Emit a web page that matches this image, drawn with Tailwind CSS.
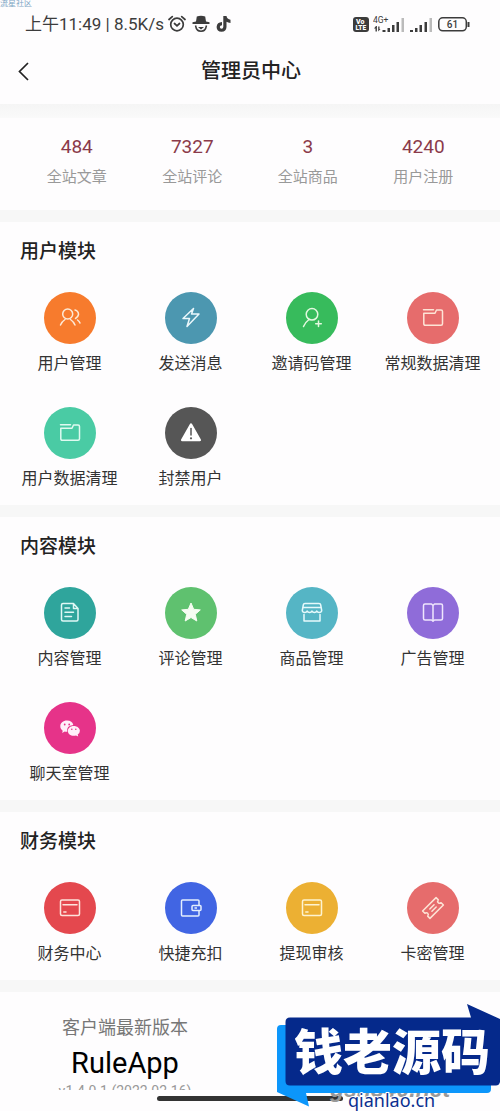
<!DOCTYPE html>
<html lang="zh-CN">
<head>
<meta charset="utf-8">
<meta name="viewport" content="width=device-width, initial-scale=1">
<title>管理员中心</title>
<script src="https://cdn.jsdelivr.net/npm/@tailwindcss/browser@4"></script>
</head>
<body class="bg-[#fefdfe] font-[Roboto,'Noto_Sans_CJK_SC',sans-serif] text-[#333]">
<div class="relative overflow-hidden">
  <span class="absolute top-0 left-0 text-[8px] leading-[8px] text-[#7fa6c4]">流星社区</span>

  <!-- Status bar -->
  <div class="flex h-12 items-center justify-between pr-[30px] pl-[25px] text-[#3c3c3c]">
    <div class="flex items-center gap-1">
      <span class="text-[17px] leading-6">上午11:49 | 8.5K/s</span>
      <svg class="h-[18px] w-[18px]" viewBox="0 0 18 18" fill="none" stroke="currentColor" stroke-width="1.7" stroke-linecap="round"><circle cx="9" cy="9.5" r="6.3"/><path d="M1 4.5 4.3 1.6M17 4.5 13.700 1.600M6.500 8.500 9 10.800 11.500 8.500"/></svg>
      <svg class="ml-[2px] h-[18px] w-[18px]" viewBox="0 0 18 18"><path d="M4 6.500 4.800 1.500Q9 0 13.200 1.500L14 6.500 17.500 7.300V9H.5V7.300Z" fill="currentColor"/><path d="M3.500 10.500Q4.500 16.300 9 16.300T14.500 10.500" fill="none" stroke="currentColor" stroke-width="1.500"/><path d="M6 12H12L9 14.500Z" fill="currentColor"/></svg>
      <svg class="ml-[1px] h-[18px] w-[18px]" viewBox="0 0 18 18" fill="currentColor"><path d="M8.300 1H11.500Q12 4.300 15.500 4.800V8Q13 7.900 11.500 6.800V12Q11.300 16.500 6.500 16.800 1.800 16.300 1.600 11.900 2 7.200 7 7V10.200Q4.900 10.300 4.800 12 5 13.600 6.500 13.700 8.200 13.500 8.300 12Z"/></svg>
    </div>
    <div class="flex items-center">
      <svg class="h-[15px] w-4" viewBox="0 0 16 15"><rect width="16" height="15" rx="3" fill="#3c3c3c"/><text x="3" y="7" font-family="Roboto" font-weight="900" font-size="7" fill="#fff">Vo</text><text x="2.500" y="13" font-family="Roboto" font-weight="900" font-size="6.500" fill="#fff">LTE</text></svg>
      <svg class="ml-1 h-[18px] w-8" viewBox="0 0 32 18"><text x="0" y="8" font-family="Roboto" font-size="8.500" fill="#3c3c3c">4G+</text><path d="M3 11 1 13.500H2.500V16.500H3.900V11ZM5.200 16.500 7.500 14H6.500V11.500H5.200Z" fill="#3c3c3c"/><path d="M9.500 15H12.500V17H9.500ZM14.500 13H17V17H14.500ZM19 10H21.500V17H19ZM23.500 7H26V17H23.500Z" fill="#3c3c3c"/><path d="M28.500 3H31V17H28.500Z" fill="#bbb"/></svg>
      <svg class="ml-[5px] h-[18px] w-[23px]" viewBox="0 0 23 18"><path d="M0 15H3V17H0ZM5 13H7.500V17H5ZM9.500 10H12V17H9.500ZM14.500 7H17V17H14.500Z" fill="#3c3c3c"/><path d="M19.500 3H22V17H19.500Z" fill="#bbb"/></svg>
      <svg class="ml-[5px] h-[15px] w-8" viewBox="0 0 32 15"><rect x=".8" y=".8" width="27.500" height="13" rx="4" fill="none" stroke="#3c3c3c" stroke-width="1.500"/><path d="M30.500 5V10" stroke="#3c3c3c" stroke-width="2"/><text x="14.500" y="11" text-anchor="middle" font-family="Roboto" font-weight="500" font-size="10" fill="#3c3c3c">61</text></svg>
    </div>
  </div>

  <!-- Title bar -->
  <header class="grid h-14 grid-cols-[48px_1fr_46px] items-center pb-[10px]">
    <button type="button" aria-label="返回" class="flex h-10 items-center pl-[17px]">
      <svg class="h-5 w-3" viewBox="0 0 12 20" fill="none" stroke="#222" stroke-width="1.700"><path d="M11 2 2.500 10.500 11 19"/></svg>
    </button>
    <h1 class="text-center text-[20px] leading-7 font-medium text-[#222]">管理员中心</h1>
  </header>
  <div class="h-[14px] bg-linear-to-b from-[#f5f5f5] to-[#fafafa]"></div>

  <!-- Site totals -->
  <dl class="grid h-[92px] grid-cols-4 px-[19px] pt-[17px] text-center">
    <div class="flex flex-col-reverse justify-end"><dt class="mt-[6px] text-[15px] leading-6 text-[#999]">全站文章</dt><dd class="text-[19px] leading-6 text-[#8b3a4a]">484</dd></div>
    <div class="flex flex-col-reverse justify-end"><dt class="mt-[6px] text-[15px] leading-6 text-[#999]">全站评论</dt><dd class="text-[19px] leading-6 text-[#8b3a4a]">7327</dd></div>
    <div class="flex flex-col-reverse justify-end"><dt class="mt-[6px] text-[15px] leading-6 text-[#999]">全站商品</dt><dd class="text-[19px] leading-6 text-[#8b3a4a]">3</dd></div>
    <div class="flex flex-col-reverse justify-end"><dt class="mt-[6px] text-[15px] leading-6 text-[#999]">用户注册</dt><dd class="text-[19px] leading-6 text-[#8b3a4a]">4240</dd></div>
  </dl>
  <div class="h-3 bg-[#f7f7f7]"></div>

  <!-- Users -->
  <section class="pt-4 pb-[14px]">
    <h2 class="px-5 text-[19px] leading-7 font-medium text-[#222]">用户模块</h2>
    <div class="mt-[26px] grid grid-cols-4 gap-y-[31px] pr-[7px] pl-[9px]">
      <button type="button" class="flex flex-col items-center gap-2 whitespace-nowrap">
        <span class="flex size-[52px] items-center justify-center rounded-full bg-[#f77b2d]"><svg class="size-6" viewBox="0 0 24 24" fill="none" stroke="#fde9d6" stroke-width="1.500" stroke-linecap="round" stroke-linejoin="round"><circle cx="9.700" cy="8" r="5"/><path d="M2.500 19Q4 15.500 7 13.500M12.500 13.500Q15.500 15.500 17 19M17 4Q20.500 5 20.500 8.500 20 11.300 17.500 12.500M19.500 14Q21.300 15.200 22 17"/></svg></span>
        <span class="text-[16px] leading-6">用户管理</span>
      </button>
      <button type="button" class="flex flex-col items-center gap-2 whitespace-nowrap">
        <span class="flex size-[52px] items-center justify-center rounded-full bg-[#4c97b0]"><svg class="size-6" viewBox="0 0 24 24" fill="none" stroke="#eaf7fb" stroke-width="1.500" stroke-linejoin="round" stroke-linecap="round"><path d="M14.500 2.500 4 12.500H10.500L8 20.500 20 8H12.500L14.500 2.500"/></svg></span>
        <span class="text-[16px] leading-6">发送消息</span>
      </button>
      <button type="button" class="flex flex-col items-center gap-2 whitespace-nowrap">
        <span class="flex size-[52px] items-center justify-center rounded-full bg-[#37bb5c]"><svg class="size-6" viewBox="0 0 24 24" fill="none" stroke="#e3f8df" stroke-width="1.500" stroke-linecap="round"><circle cx="12" cy="8.300" r="5.800"/><path d="M3.500 20.500Q5 16.500 9 13.500M18.500 15V20.500M15.700 17.800H21.300"/></svg></span>
        <span class="text-[16px] leading-6">邀请码管理</span>
      </button>
      <button type="button" class="flex flex-col items-center gap-2 whitespace-nowrap">
        <span class="flex size-[52px] items-center justify-center rounded-full bg-[#e66c6c]"><svg class="size-6" viewBox="0 0 24 24" fill="none" stroke="#fde4d6" stroke-width="1.500" stroke-linecap="round" stroke-linejoin="round"><path d="M2.500 3.800H12.500M2.800 7.200H14L15.500 4H20Q21.500 4 21.500 5.500V17.800Q21.500 19.300 20 19.300H4.300Q2.800 19.300 2.800 17.800Z"/></svg></span>
        <span class="text-[16px] leading-6">常规数据清理</span>
      </button>
      <button type="button" class="flex flex-col items-center gap-2 whitespace-nowrap">
        <span class="flex size-[52px] items-center justify-center rounded-full bg-[#4acba4]"><svg class="size-6" viewBox="0 0 24 24" fill="none" stroke="#dffaf0" stroke-width="1.500" stroke-linecap="round" stroke-linejoin="round"><path d="M2.500 3.800H12.500M2.800 7.200H14L15.500 4H20Q21.500 4 21.500 5.500V17.800Q21.500 19.300 20 19.300H4.300Q2.800 19.300 2.800 17.800Z"/></svg></span>
        <span class="text-[16px] leading-6">用户数据清理</span>
      </button>
      <button type="button" class="flex flex-col items-center gap-2 whitespace-nowrap">
        <span class="flex size-[52px] items-center justify-center rounded-full bg-[#565656]"><svg class="size-6" viewBox="0 0 24 24"><path d="M12 3.500 20.800 19H3.200Z" fill="#fff" stroke="#fff" stroke-width="2.500" stroke-linejoin="round"/><path d="M12 7.500V14" stroke="#565656" stroke-width="1.500" stroke-linecap="round"/><circle cx="12" cy="17.300" r="1.100" fill="#565656"/></svg></span>
        <span class="text-[16px] leading-6">封禁用户</span>
      </button>
    </div>
  </section>
  <div class="h-3 bg-[#f7f7f7]"></div>

  <!-- Content -->
  <section class="pt-4 pb-[14px]">
    <h2 class="px-5 text-[19px] leading-7 font-medium text-[#222]">内容模块</h2>
    <div class="mt-[26px] grid grid-cols-4 gap-y-[31px] pr-[7px] pl-[9px]">
      <button type="button" class="flex flex-col items-center gap-2 whitespace-nowrap">
        <span class="flex size-[52px] items-center justify-center rounded-full bg-[#2fa59c]"><svg class="size-6" viewBox="0 0 24 24" fill="none" stroke="#e0f8f5" stroke-width="1.500" stroke-linecap="round" stroke-linejoin="round"><path d="M15.500 2.500H5Q3.500 2.500 3.500 4V18.500Q3.500 20 5 20H18.500Q20 20 20 18.500V7.500ZM15.500 2.500V7.500H20M7 7H11.500M7 11.300H15.500M7 15.500H13.500"/></svg></span>
        <span class="text-[16px] leading-6">内容管理</span>
      </button>
      <button type="button" class="flex flex-col items-center gap-2 whitespace-nowrap">
        <span class="flex size-[52px] items-center justify-center rounded-full bg-[#5fc16f]"><svg class="size-6" viewBox="0 0 24 24" fill="#f6fdf2" stroke="#f6fdf2" stroke-linejoin="round"><path d="M12 2 14.700 8.300 21.300 8.900 16.300 13.300 17.800 20 12 16.500 6.200 20 7.700 13.300 2.700 8.900 9.300 8.300Z"/></svg></span>
        <span class="text-[16px] leading-6">评论管理</span>
      </button>
      <button type="button" class="flex flex-col items-center gap-2 whitespace-nowrap">
        <span class="flex size-[52px] items-center justify-center rounded-full bg-[#55b5c5]"><svg class="size-6" viewBox="0 0 24 24" fill="none" stroke="#e6f9fb" stroke-width="1.500" stroke-linecap="round" stroke-linejoin="round"><path d="M5 2.500H19Q20.500 2.500 20.700 4L21.700 9.500Q21.500 11.500 19.200 11.500 17.500 11.500 16.800 10 16 11.500 14.400 11.500 12.800 11.500 12 10 11.200 11.500 9.600 11.500 8 11.500 7.200 10 6.500 11.500 4.800 11.500 2.500 11.500 2.300 9.500L3.300 4Q3.500 2.500 5 2.500ZM3 6.500H21M4 13.500V20H20V13.500"/></svg></span>
        <span class="text-[16px] leading-6">商品管理</span>
      </button>
      <button type="button" class="flex flex-col items-center gap-2 whitespace-nowrap">
        <span class="flex size-[52px] items-center justify-center rounded-full bg-[#8f6cd9]"><svg class="size-6" viewBox="0 0 24 24" fill="none" stroke="#efe6fd" stroke-width="1.500" stroke-linejoin="round"><path d="M12 4.500 10.500 3H4Q2.500 3 2.500 4.500V17.500Q2.500 19 4 19H10.500L12 20.300 13.500 19H20Q21.500 19 21.500 17.500V4.500Q21.500 3 20 3H13.500ZM12 4.500V20"/></svg></span>
        <span class="text-[16px] leading-6">广告管理</span>
      </button>
      <button type="button" class="flex flex-col items-center gap-2 whitespace-nowrap">
        <span class="flex size-[52px] items-center justify-center rounded-full bg-[#e63389]"><svg class="size-6" viewBox="0 0 24 24"><path d="M9 4.500C5 4.500 2.300 7 2.300 10.200 2.300 12.200 3.200 13.600 4.700 14.700L4.200 17 6.700 15.500Q8 15.900 9.300 15.800 8 9.700 15.300 9 14.300 4.500 9 4.500Z" fill="#fff0fa"/><path d="M15.700 9.900C12.200 9.900 9.900 12.200 9.900 14.900S12.300 19.800 15.800 19.800Q17 19.800 18 19.400L20.200 20.600 19.700 18.600Q21.900 17.200 21.900 14.800C21.900 12.200 19.200 9.900 15.700 9.900Z" fill="#fff0fa"/><g fill="#e63389"><circle cx="6.700" cy="8.500" r=".9"/><circle cx="11.200" cy="8.500" r=".9"/><circle cx="13.800" cy="13.300" r=".8"/><circle cx="17.800" cy="13.300" r=".8"/></g></svg></span>
        <span class="text-[16px] leading-6">聊天室管理</span>
      </button>
    </div>
  </section>
  <div class="h-3 bg-[#f7f7f7]"></div>

  <!-- Finance -->
  <section class="pt-4 pb-[14px]">
    <h2 class="px-5 text-[19px] leading-7 font-medium text-[#222]">财务模块</h2>
    <div class="mt-[26px] grid grid-cols-4 gap-y-[31px] pr-[7px] pl-[9px]">
      <button type="button" class="flex flex-col items-center gap-2 whitespace-nowrap">
        <span class="flex size-[52px] items-center justify-center rounded-full bg-[#e4484e]"><svg class="size-6" viewBox="0 0 24 24" fill="none" stroke="#fde3dc" stroke-width="1.500" stroke-linecap="round"><rect x="2.500" y="4" width="19" height="15.500" rx="1.500"/><path d="M5 8.700H19M5.800 16H8"/></svg></span>
        <span class="text-[16px] leading-6">财务中心</span>
      </button>
      <button type="button" class="flex flex-col items-center gap-2 whitespace-nowrap">
        <span class="flex size-[52px] items-center justify-center rounded-full bg-[#4165e3]"><svg class="size-6" viewBox="0 0 24 24" fill="none" stroke="#e4eefd" stroke-width="1.500" stroke-linejoin="round"><path d="M20 9V5Q20 4 19 4H3.500Q2.500 4 2.500 5V19Q2.500 20 3.500 20H19Q20 20 20 19V15"/><rect x="13" y="9.500" width="9" height="5" rx="1"/><path d="M15.500 12H18"/></svg></span>
        <span class="text-[16px] leading-6">快捷充扣</span>
      </button>
      <button type="button" class="flex flex-col items-center gap-2 whitespace-nowrap">
        <span class="flex size-[52px] items-center justify-center rounded-full bg-[#ecb033]"><svg class="size-6" viewBox="0 0 24 24" fill="none" stroke="#fdf3d0" stroke-width="1.500" stroke-linecap="round"><rect x="2.500" y="4" width="19" height="15.500" rx="1.500"/><path d="M5 8.700H19M5.800 16H8"/></svg></span>
        <span class="text-[16px] leading-6">提现审核</span>
      </button>
      <button type="button" class="flex flex-col items-center gap-2 whitespace-nowrap">
        <span class="flex size-[52px] items-center justify-center rounded-full bg-[#e66c6c]"><svg class="size-6" viewBox="0 0 24 24" fill="none" stroke="#fde4d6" stroke-width="1.500" stroke-linecap="round" stroke-linejoin="round"><g transform="rotate(-45 12 12)"><path d="M2.500 6.800H21.500V10Q19.500 10.200 19.500 12T21.500 14V17.200H2.500V14Q4.500 13.800 4.500 12T2.500 10ZM9 10.500H15M9 13.500H15"/></g></svg></span>
        <span class="text-[16px] leading-6">卡密管理</span>
      </button>
    </div>
  </section>
  <div class="h-3 bg-[#f7f7f7]"></div>

  <!-- Client version -->
  <section class="grid grid-cols-2 pt-[22px] text-center">
    <div>
      <h2 class="text-[18px] leading-7 text-[#777]">客户端最新版本</h2>
      <p class="text-[29px] leading-[42px] text-black">RuleApp</p>
      <p class="h-[6px] overflow-hidden text-[14px] leading-[14px] text-[#999]">v1.4.0.1 (2022.02.16)</p>
    </div>
  </section>
  <div class="flex h-[21px] justify-center pt-[6px]"><div class="h-[5px] w-[186px] rounded-full bg-[#333]"></div></div>

  <!-- Site badge over the page's corner -->
  <svg class="absolute right-0 bottom-0 h-[121px] w-[250px]" viewBox="0 0 250 121">
    <text x="80" y="107" font-family="Liberation Sans" font-weight="700" font-style="italic" font-size="23" fill="#999">gsh540.net</text>
    <path d="M31 35H241V99Q241 103 237 103H56L59 116.500 27 102V39Q27 35 31 35Z" fill="#0c96fb"/>
    <path d="M40 27.500H221L217 14 250 29V92Q249 95.500 246 95.500H40Q35.500 95.500 35.500 91V32Q35.500 27.500 40 27.500Z" fill="#05298b"/>
    <text x="44" y="80" font-family="Noto Sans CJK SC" font-weight="900" font-size="49" fill="#fff">钱老源码</text>
    <text x="98" y="117" font-family="Noto Sans" font-weight="400" font-size="18" fill="#0b2f8f" stroke="#fff" stroke-width="2" paint-order="stroke">qianlao.cn</text>
  </svg>
</div>
</body>
</html>
